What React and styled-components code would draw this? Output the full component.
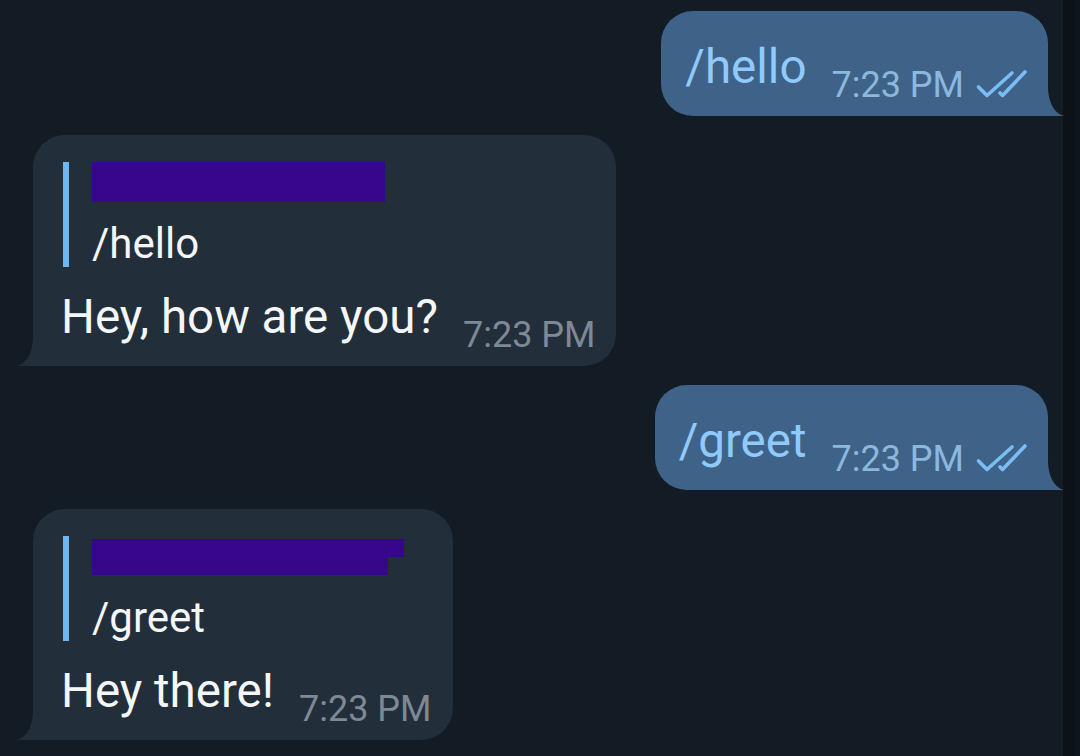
import React from 'react';
import styled, {createGlobalStyle} from 'styled-components';

const GlobalStyle = createGlobalStyle`
  html, body {
    margin: 0;
    padding: 0;
    background: #131b25;
  }
  body {
    font-family: Roboto, "Noto Sans", "Liberation Sans", sans-serif;
  }
`

const Screen = styled.div`
  display: flex;
  height: 756px;
  overflow: hidden;
  background: #131b25;
`

const Feed = styled.div`
  flex: 1;
  display: flex;
  flex-direction: column;
  gap: 19px;
  padding: 11px 15px 0 33px;
`

const EdgeStrip = styled.div`
  width: 17px;
  background: linear-gradient(90deg, #0d1218 0 12px, #10161d 12px 100%);
`

const Row = styled.div`
  display: flex;
  justify-content: ${props => props.out ? "flex-end" : "flex-start"};
`

const Bubble = styled.div`
  position: relative;
  display: flex;
  background: ${props => props.out ? "#3f6289" : "#232e3b"};
  border-radius: ${props => props.out ? "32px 32px 0 32px" : "32px 32px 32px 0"};
`

const OutBubble = styled(Bubble)`
  align-items: flex-end;
  gap: 25px;
  padding: 28px 21px 13px 24px;
`

const InBubble = styled(Bubble)`
  flex-direction: column;
  padding: 27px 21px 13px 28px;
`

const Tail = styled.svg`
  position: absolute;
  bottom: 0;
  width: 16px;
  height: 30px;
  overflow: visible;
  ${props => props.out ? "right: -16px;" : "left: -16px;"}
`

const MessageText = styled.div`
  font-size: 47.5px;
  line-height: 56px;
  margin-bottom: 8px;
  color: ${props => props.out ? "#8fcafb" : "#f4f6f8"};
  white-space: nowrap;
`

const Meta = styled.div`
  display: flex;
  align-items: flex-start;
  gap: 11px;
`

const Time = styled.span`
  font-size: 36px;
  line-height: 35px;
  color: ${props => props.out ? "#8cb8de" : "#7d8995"};
  white-space: nowrap;
`

const Checks = styled.svg`
  width: 52px;
  height: 32px;
  flex-shrink: 0;
`

const Quote = styled.div`
  display: flex;
  gap: 23px;
  margin-left: 2px;
  margin-bottom: 22px;
`

const QuoteBar = styled.div`
  width: 6px;
  background: #6eb6f2;
`

const QuoteBody = styled.div`
  display: flex;
  flex-direction: column;
`

const NameRow = styled.div`
  height: 58px;
  display: flex;
  flex-direction: column;
  padding-top: ${props => props.offset}px;
  box-sizing: border-box;
`

const Redaction = styled.div`
  width: ${props => props.width}px;
  height: ${props => props.height}px;
  background: #37078b;
`

const QuoteText = styled.div`
  font-size: 42px;
  line-height: 47px;
  color: #f4f6f8;
`

const MainLine = styled.div`
  display: flex;
  align-items: flex-end;
  gap: 25px;
`

const DoubleCheck = () => (
    <Checks viewBox="0 0 52 32">
        <g fill="none" stroke="#7abdf5" strokeWidth="3.6" strokeLinecap="round" strokeLinejoin="round">
            <path d="M3.5 19 L12 27.5 L37 5"/>
            <path d="M25 25 L27.5 27.5 L50 4"/>
        </g>
    </Checks>
)

const BubbleTail = ({out}) => (
    <Tail out={out} viewBox="0 0 16 30">
        {out
            ? <path d="M0 0 C0 14 5 27 16 30 L-1 30 L-1 0 Z" fill="#3f6289"/>
            : <path d="M16 0 C16 14 11 27 0 30 L17 30 L17 0 Z" fill="#232e3b"/>}
    </Tail>
)

const Outgoing = ({text}) => (
    <Row out>
        <OutBubble out>
            <MessageText out>{text}</MessageText>
            <Meta>
                <Time out>7:23 PM</Time>
                <DoubleCheck/>
            </Meta>
            <BubbleTail out/>
        </OutBubble>
    </Row>
)

const Incoming = ({quoted, text, redact}) => (
    <Row>
        <InBubble>
            <Quote>
                <QuoteBar/>
                <QuoteBody>
                    <NameRow offset={redact.offset}>
                        {redact.blocks.map((b, i) => <Redaction key={i} width={b[0]} height={b[1]}/>)}
                    </NameRow>
                    <QuoteText>{quoted}</QuoteText>
                </QuoteBody>
            </Quote>
            <MainLine>
                <MessageText>{text}</MessageText>
                <Time>7:23 PM</Time>
            </MainLine>
            <BubbleTail/>
        </InBubble>
    </Row>
)

export default function App() {
    return (
        <>
            <GlobalStyle/>
            <Screen>
                <Feed>
                    <Outgoing text="/hello"/>
                    <Incoming
                        quoted="/hello"
                        text="Hey, how are you?"
                        redact={{offset: 0, blocks: [[293, 40]]}}
                    />
                    <Outgoing text="/greet"/>
                    <Incoming
                        quoted="/greet"
                        text="Hey there!"
                        redact={{offset: 3, blocks: [[312, 18], [296, 18]]}}
                    />
                </Feed>
                <EdgeStrip/>
            </Screen>
        </>
    )
}
